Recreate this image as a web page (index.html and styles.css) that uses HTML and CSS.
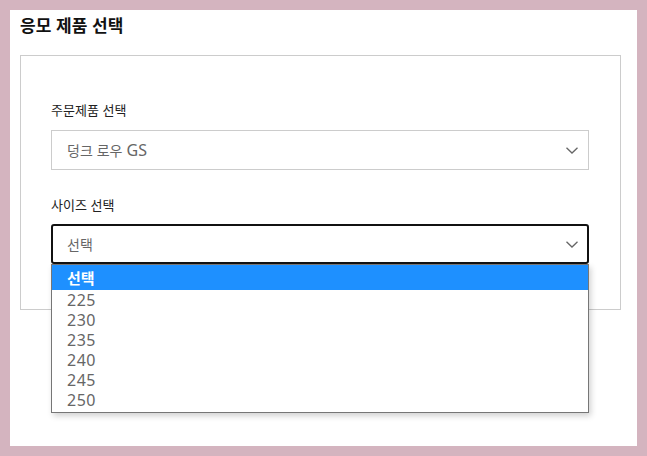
FILE: index.html
```html
<!DOCTYPE html>
<html lang="ko">
<head>
<meta charset="utf-8">
<link rel="stylesheet" href="styles.css">
</head>
<body>
<div class="panel">
  <h2 class="title">응모 제품 선택</h2>
  <div class="box">
    <div class="field field-first">
      <div class="label">주문제품 선택</div>
      <div class="select">
        <span class="value">덩크 로우 <span class="latin">GS</span></span>
        <svg class="chev" width="12" height="7" viewBox="0 0 12 7"><path d="M0.5 0.8 L6 6 L11.5 0.8" fill="none" stroke="#666" stroke-width="1.3"/></svg>
      </div>
    </div>
    <div class="field field-second">
      <div class="label">사이즈 선택</div>
      <div class="select select-open">
        <span class="value">선택</span>
        <svg class="chev" width="12" height="7" viewBox="0 0 12 7"><path d="M0.5 0.8 L6 6 L11.5 0.8" fill="none" stroke="#666" stroke-width="1.3"/></svg>
        <ul class="menu">
          <li class="opt opt-active">선택</li>
          <li class="opt">225</li>
          <li class="opt">230</li>
          <li class="opt">235</li>
          <li class="opt">240</li>
          <li class="opt">245</li>
          <li class="opt">250</li>
        </ul>
      </div>
    </div>
  </div>
</div>
</body>
</html>
```
FILE: styles.css
```css
html, body {
  margin: 0;
  padding: 0;
}
body {
  background: #d4b4bf;
  width: 647px;
  height: 456px;
  overflow: hidden;
  font-family: "Noto Sans", "Noto Sans CJK KR", sans-serif;
}
.panel {
  margin: 10px;
  width: 627px;
  height: 436px;
  background: #fff;
  box-sizing: border-box;
  padding: 3px 10px 0 10px;
}
.title {
  margin: 0;
  font-size: 17px;
  font-weight: 700;
  line-height: 24px;
  color: #111;
  font-family: "Noto Sans CJK KR", sans-serif;
}
.box {
  margin-top: 18px;
  width: 601px;
  height: 255px;
  box-sizing: border-box;
  border: 1px solid #cccccc;
  padding: 0 30px;
}
.field-first {
  padding-top: 44px;
}
.field-second {
  padding-top: 25px;
}
.label {
  font-family: "Noto Sans CJK KR", sans-serif;
  font-size: 13px;
  line-height: 20px;
  color: #222;
  margin-bottom: 10px;
}
.field-second .label {
  margin-bottom: 9px;
}
.select {
  position: relative;
  width: 538px;
  height: 40px;
  box-sizing: border-box;
  border: 1px solid #cccccc;
  display: flex;
  align-items: center;
  padding-left: 15px;
}
.select-open {
  border: 2px solid #111;
  border-radius: 3px;
  padding-left: 14px;
}
.value {
  font-family: "Noto Sans CJK KR", sans-serif;
  font-size: 14px;
  color: #666;
  flex: 1;
}
.latin {
  font-family: "Noto Sans", sans-serif;
  font-size: 16px;
  letter-spacing: 0.3px;
}
.chev {
  margin-right: 10px;
}
.select-open .chev {
  margin-right: 9px;
}
.menu {
  position: absolute;
  left: -2px;
  top: 38px;
  width: 538px;
  box-sizing: border-box;
  margin: 0;
  padding: 0 0 2px 0;
  list-style: none;
  background: #fff;
  border: 1px solid #767676;
  box-shadow: 2px 3px 6px rgba(0,0,0,0.18);
}
.opt {
  font-family: "Noto Sans", "Noto Sans CJK KR", sans-serif;
  font-size: 16px;
  letter-spacing: 0.5px;
  line-height: 20px;
  height: 20px;
  padding-left: 15px;
  color: #666;
}
.opt-active {
  background: #1e90ff;
  color: #fff;
  font-weight: 700;
  height: 25px;
  line-height: 25px;
  font-size: 15px;
  letter-spacing: 0;
  font-family: "Noto Sans CJK KR", sans-serif;
}
```
